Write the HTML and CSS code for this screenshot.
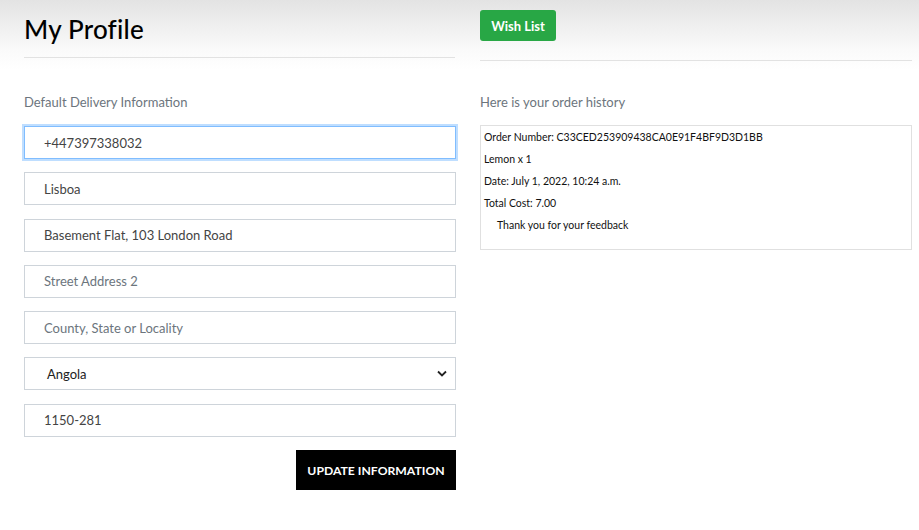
FILE: index.html
```html
<!DOCTYPE html>
<html>
<head>
<meta charset="utf-8">
<link rel="stylesheet" href="styles.css">
</head>
<body>
<div class="page">
  <div class="col">
    <div class="head">
      <h1 class="title">My Profile</h1>
    </div>
    <hr class="rule">
    <p class="label">Default Delivery Information</p>
    <form class="form">
      <input class="field focus" type="text" value="+447397338032">
      <input class="field" type="text" value="Lisboa">
      <input class="field" type="text" value="Basement Flat, 103 London Road">
      <input class="field" type="text" placeholder="Street Address 2">
      <input class="field" type="text" placeholder="County, State or Locality">
      <div class="select">
        <span class="select-text">Angola</span>
        <svg class="chev" width="10" height="7" viewBox="0 0 10 7"><path d="M1 1.5 L5 5.5 L9 1.5" fill="none" stroke="#222" stroke-width="1.8"/></svg>
      </div>
      <input class="field" type="text" value="1150-281">
      <div class="actions"><button type="button" class="update">UPDATE INFORMATION</button></div>
    </form>
  </div>
  <div class="col">
    <div class="head head-right">
      <button type="button" class="wish">Wish List</button>
    </div>
    <hr class="rule rule-right">
    <p class="label">Here is your order history</p>
    <div class="orders">
      <p class="line">Order Number: C33CED253909438CA0E91F4BF9D3D1BB</p>
      <p class="line">Lemon x 1</p>
      <p class="line">Date: July 1, 2022, 10:24 a.m.</p>
      <p class="line">Total Cost: 7.00</p>
      <p class="line indent">Thank you for your feedback</p>
    </div>
  </div>
</div>
</body>
</html>
```
FILE: styles.css
```css
html, body { margin: 0; padding: 0; }
body {
  font-family: Lato, "Liberation Sans", sans-serif;
  background: linear-gradient(to bottom, #e3e3e3 0px, #fafafa 50px, #ffffff 70px) no-repeat;
  background-size: 100% 80px;
  background-color: #fff;
  width: 919px;
  height: 530px;
  overflow: hidden;
}
.page {
  display: flex;
  gap: 24px;
  padding: 0 7px 0 24px;
}
.col { width: 432px; display: flex; flex-direction: column; }
.head { height: 57px; display: flex; align-items: center; }
.head-right { height: 60px; align-items: flex-start; padding-top: 10px; box-sizing: border-box; }
.title {
  margin: 0;
  font-size: 26px;
  font-weight: 500;
  color: #000;
  padding-bottom: 0;
  letter-spacing: 0.2px;
}
.rule { margin: 0; border: 0; border-top: 1px solid #e2e2e2; width: 431px; }
.rule-right { width: 432px; }
.label {
  margin: 36px 0 16px;
  font-size: 13px;
  color: #6c757d;
  line-height: 16px;
}
.col:last-child .label { margin-top: 33px; margin-bottom: 15px; }
.form { display: flex; flex-direction: column; gap: 13.3px; }
.field, .select {
  box-sizing: border-box;
  width: 432px;
  height: 33px;
  border: 1px solid #ced4da;
  background: #fff;
  padding: 0 19px;
  font-family: Lato, "Liberation Sans", sans-serif;
  font-size: 13px;
  color: #444;
  outline: none;
  margin: 0;
  border-radius: 0;
}
.field::placeholder { color: #6c757d; opacity: 1; }
.focus {
  border-color: #80bdff;
  box-shadow: 0 0 0 2px rgba(0,123,255,0.25);
}
.select {
  display: flex;
  align-items: center;
  justify-content: space-between;
  padding: 0 8px 0 22px;
  color: #222;
}
.chev { display: block; }
.actions { display: flex; justify-content: flex-end; margin-top: 0; }
.update {
  background: #000;
  color: #fff;
  border: 0;
  height: 40px;
  width: 160px;
  font-family: Lato, "Liberation Sans", sans-serif;
  font-weight: 700;
  font-size: 12.2px;
  padding: 0;
  border-radius: 0;
}
.wish {
  background: #28a745;
  color: #fff;
  border: 0;
  border-radius: 3px;
  width: 76px;
  height: 31px;
  font-family: Lato, "Liberation Sans", sans-serif;
  font-weight: 700;
  font-size: 13px;
  padding: 0;
}
.orders {
  box-sizing: border-box;
  width: 432px;
  height: 125px;
  border: 1px solid #e0e0e0;
  padding: 0 3px;
}
.line {
  margin: 0;
  font-size: 10.5px;
  line-height: 22px;
  color: #111;
}
.indent { padding-left: 13px; }
```
